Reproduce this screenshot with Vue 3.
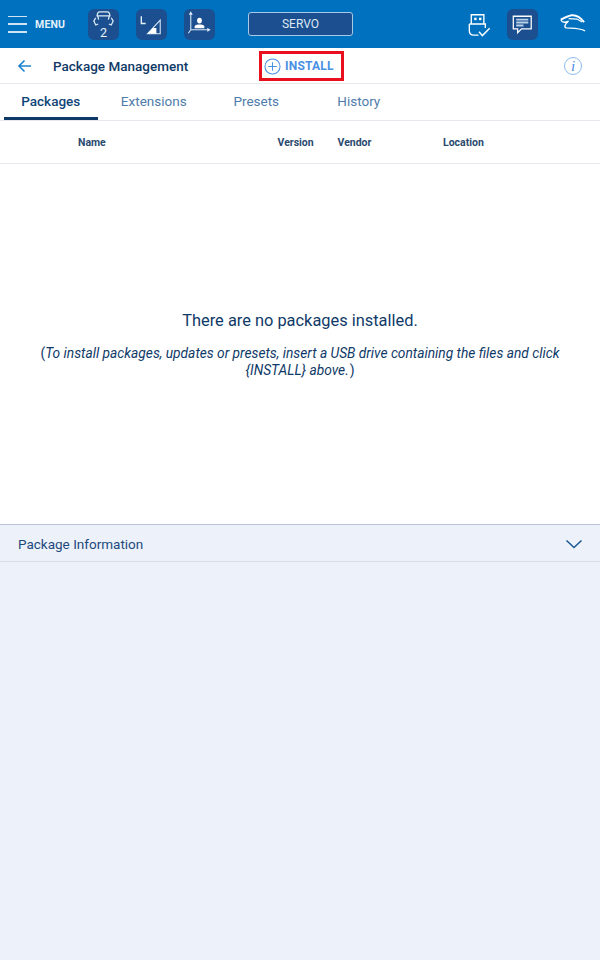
<template>
  <div class="page">
    <header class="topbar">
      <button class="menu">
        <span class="burger"><i></i><i></i><i></i></span>
        <span class="menu-label">MENU</span>
      </button>
      <div class="tool-group">
        <div class="tool">
          <svg width="32" height="32" viewBox="0 0 32 32" fill="none" stroke="#dcebf7" stroke-width="1.3">
            <path d="M9.5 8 C9.5 4.5 10.5 3.5 12 3.5 H20 C21.5 3.5 22.5 4.5 22.5 8" />
            <path d="M9 7.5 H23 M10 7.5 L11 11.5 M22 7.5 L21 11.5" />
            <path d="M8 9.5 L6 13 L8 17 L10.5 16 M24 9.5 L26 13 L24 17 L21.5 16" />
            <text x="16" y="29" class="tool-num">2</text>
          </svg>
        </div>
        <div class="tool">
          <svg width="32" height="32" viewBox="0 0 32 32" fill="none">
            <path d="M5.5 8 V15.5 H10" stroke="#e6f1fa" stroke-width="1.4" />
            <path d="M12 26 L25 12 V26 Z" stroke="#dcebf7" stroke-width="1.1" />
            <path d="M12 26 L17.5 20 H21 V26 Z" fill="#fff" />
          </svg>
        </div>
        <div class="tool">
          <svg width="32" height="32" viewBox="0 0 32 32" fill="none" stroke="#dcebf7" stroke-width="1.1">
            <path d="M7 22 V4.5 M5.5 6.5 L7 4 L8.5 6.5" />
            <path d="M7 22 H26 M24 20.5 L26.5 22 L24 23.5" />
            <path d="M7 22 L4.5 25.5" />
            <ellipse cx="16" cy="12.5" rx="2.5" ry="3" fill="#fff" stroke="none" />
            <path d="M11 20.5 V18.5 C11 17 13.5 16.5 16 16.5 C18.5 16.5 21 17 21 18.5 V20.5 Z" fill="#fff" stroke="none" />
          </svg>
        </div>
      </div>
      <div class="mode">SERVO</div>
      <div class="status-group">
        <div class="status">
          <svg width="32" height="32" viewBox="0 0 32 32" fill="none" stroke="#fff" stroke-width="1.4">
            <path d="M7.5 16 V6.5 H20.5 V16" />
            <path d="M5.5 16 H22 V20 M5.5 16 V23 C5.5 26 7 27.5 10 27.5 H15" />
            <rect x="10.5" y="9.5" width="2.5" height="2.5" fill="#fff" stroke="none" />
            <rect x="15.5" y="9.5" width="2.5" height="2.5" fill="#fff" stroke="none" />
            <path d="M15.5 24 L19 28 L26.5 20.5" stroke-width="1.5" />
          </svg>
        </div>
        <div class="status active">
          <svg width="32" height="32" viewBox="0 0 32 32" fill="none">
            <path d="M6.5 8 H25 V21 H15 L11 25 V21 H6.5 Z" stroke="#fff" stroke-width="1.3" />
            <path d="M9.5 11.5 H22 M9.5 14.5 H22 M9.5 17.5 H17" stroke="#b9d3ea" stroke-width="2" />
          </svg>
        </div>
        <div class="status hand">
          <svg width="32" height="32" viewBox="0 0 32 32" fill="none" stroke="#fff" stroke-width="1.4">
            <path d="M5 11.5 C9 9.5 12 8 16 7 C20 6.5 25 9 29 14" stroke-width="2" />
            <path d="M5 11.5 C6 14.5 9 15 13 13 M13 13 C9 16.5 8 19 10.5 20 C17 20.5 24 20 30 23" />
            <path d="M13 10.5 L22 11 M22 11 L27 14" stroke-width="1.2" />
          </svg>
        </div>
      </div>
    </header>

    <div class="subbar">
      <svg class="back" width="16" height="14" viewBox="0 0 16 14" fill="none" stroke="#1b84cf" stroke-width="1.6">
        <path d="M14 7 H2.5 M7.5 1.5 L2 7 L7.5 12.5" />
      </svg>
      <h1 class="title">Package Management</h1>
      <div class="install-slot">
        <button class="install">
          <svg width="17" height="17" viewBox="0 0 18 18" fill="none" stroke="#4a90e2" stroke-width="1.1">
            <circle cx="9" cy="9" r="8" />
            <path d="M9 4.5 V13.5 M4.5 9 H13.5" />
          </svg>
          <span>INSTALL</span>
        </button>
      </div>
      <span class="info">i</span>
    </div>

    <nav class="tabs">
      <div v-for="(tab, i) in tabs" :key="tab" class="tab" :class="{ selected: i === 0 }">{{ tab }}</div>
    </nav>

    <div class="thead">
      <span v-for="col in columns" :key="col.name" class="th" :style="{ width: col.width + 'px' }">{{ col.name }}</span>
    </div>

    <main class="empty">
      <p class="empty-title">There are no packages installed.</p>
      <p class="empty-hint">
        (<em>To install packages, updates or presets, insert a USB drive containing the files and click {INSTALL} above.</em>)
      </p>
    </main>

    <section class="details">
      <div class="details-head">
        <span>Package Information</span>
        <svg width="18" height="10" viewBox="0 0 18 10" fill="none" stroke="#1d5a94" stroke-width="1.6">
          <path d="M1.5 1.5 L9 8.5 L16.5 1.5" />
        </svg>
      </div>
    </section>
  </div>
</template>

<script setup>
const tabs = ['Packages', 'Extensions', 'Presets', 'History']

const columns = [
  { name: 'Name', width: 199.5 },
  { name: 'Version', width: 60 },
  { name: 'Vendor', width: 105.5 },
  { name: 'Location', width: 100 }
]
</script>

<style>
body {
  margin: 0;
  background: #fff;
}
</style>

<style scoped>
.page {
  width: 600px;
  height: 960px;
  display: flex;
  flex-direction: column;
  overflow: hidden;
  font-family: Roboto, "Liberation Sans", sans-serif;
  color: #0f3a68;
  background: #fff;
}

/* top bar */
.topbar {
  height: 48px;
  flex: none;
  display: flex;
  align-items: center;
  background: #0071bf;
}

.menu {
  width: 88px;
  flex: none;
  display: flex;
  align-items: center;
  gap: 8px;
  padding: 0 0 0 8px;
  border: none;
  background: none;
  color: #e6f1fa;
  font-family: inherit;
}

.burger {
  width: 19px;
  height: 17px;
  display: flex;
  flex-direction: column;
  justify-content: space-between;
}

.burger i {
  height: 1.5px;
  background: #cfe4f5;
}

.menu-label {
  font-size: 10.5px;
  font-weight: 700;
  letter-spacing: 0.2px;
}

.tool-group {
  display: flex;
  gap: 17px;
}

.tool {
  width: 31px;
  height: 31px;
  border-radius: 6px;
  background: #1b4f8f;
  display: flex;
  align-items: center;
  justify-content: center;
}

.tool-num {
  fill: #e6f1fa;
  stroke: none;
  font-size: 13px;
  text-anchor: middle;
  font-family: Roboto, sans-serif;
}

.mode {
  width: 103px;
  height: 22px;
  margin-left: 33px;
  flex: none;
  display: flex;
  align-items: center;
  justify-content: center;
  border: 1px solid #a9c9e6;
  border-radius: 3px;
  background: #1b4f8f;
  color: #dce9f5;
  font-size: 12px;
}

.status-group {
  margin-left: auto;
  margin-right: 13px;
  display: flex;
  gap: 12px;
}

.status {
  width: 31px;
  height: 31px;
  border-radius: 6px;
  display: flex;
  align-items: center;
  justify-content: center;
}

.status.active {
  background: #1b4f8f;
}

.status.hand {
  margin-left: 6px;
}

/* title row */
.subbar {
  height: 35px;
  flex: none;
  display: flex;
  align-items: center;
  position: relative;
  border-bottom: 1px solid #e6e9ee;
}

.back {
  margin-left: 17px;
  flex: none;
}

.title {
  margin: 0 0 0 20px;
  width: 206px;
  flex: none;
  font-size: 13.5px;
  font-weight: 500;
  color: #0f3a68;
}

.install-slot {
  flex: none;
  margin-top: 1px;
  width: 85px;
  height: 30px;
  box-sizing: border-box;
  border: 3px solid #e8101e;
  padding-left: 2px;
  display: flex;
  align-items: center;
}

.install {
  display: flex;
  align-items: center;
  gap: 4px;
  padding: 0;
  border: none;
  background: none;
  color: #4a90e2;
  font-family: inherit;
  font-size: 12px;
  font-weight: 700;
  letter-spacing: 0.2px;
}

.info {
  position: absolute;
  right: 18px;
  top: 9px;
  width: 16px;
  height: 16px;
  border: 1px solid #8cbcf0;
  border-radius: 50%;
  display: flex;
  align-items: center;
  justify-content: center;
  color: #4a90e2;
  font-family: "Liberation Serif", serif;
  font-size: 15px;
  font-style: italic;
}

/* tabs */
.tabs {
  height: 36px;
  flex: none;
  display: flex;
  border-bottom: 1px solid #e6e9ee;
  box-sizing: content-box;
}

.tab {
  width: 102.5px;
  display: flex;
  align-items: center;
  justify-content: center;
  font-size: 13.5px;
  color: #4f7cab;
  box-sizing: border-box;
  padding-bottom: 2px;
}

.tab.selected {
  margin: 0 5px 0 4px;
  width: 93.5px;
  color: #0f4478;
  font-weight: 500;
  border-bottom: 3px solid #0f3a68;
  padding-top: 1px;
  padding-bottom: 0;
}

/* table header */
.thead {
  height: 42px;
  flex: none;
  display: flex;
  align-items: center;
  padding-left: 78px;
  border-bottom: 1px solid #e6e9ee;
}

.th {
  flex: none;
  font-size: 10.5px;
  font-weight: 700;
  color: #2a4a6e;
}

/* empty state */
.empty {
  flex: 1;
  display: flex;
  flex-direction: column;
  align-items: center;
  justify-content: center;
  text-align: center;
  padding: 2px 30px 0;
}

.empty-title {
  margin: 0 0 15px;
  font-size: 16.4px;
  color: #0f3a68;
}

.empty-hint {
  margin: 0;
  font-size: 13.75px;
  line-height: 17px;
  color: #0f3a68;
}

.empty-hint em {
  padding-right: 1px;
}

/* details panel */
.details {
  height: 436px;
  flex: none;
  box-sizing: border-box;
  border-top: 1px solid #b9c2d6;
  background: #edf2fa;
}

.details-head {
  height: 37px;
  box-sizing: border-box;
  padding: 1px 17px 0 18px;
  display: flex;
  align-items: center;
  justify-content: space-between;
  border-bottom: 1px solid #d8dde6;
  font-size: 13.5px;
  color: #1e4a7c;
}
</style>
